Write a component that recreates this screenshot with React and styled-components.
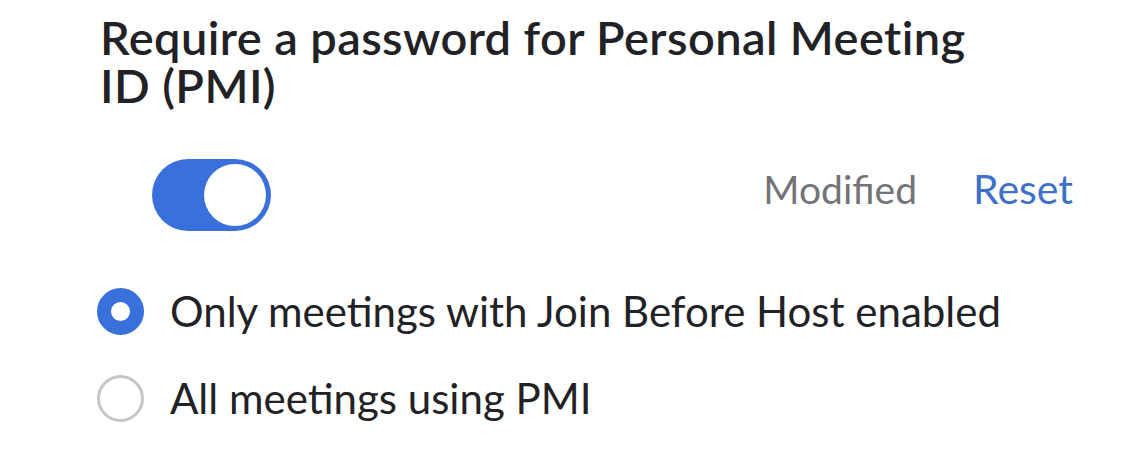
import React, { useState } from "react";
import styled, { createGlobalStyle } from "styled-components";

const GlobalStyle = createGlobalStyle`
  body {
    margin: 0;
    background: #fff;
    font-family: "Lato", "Liberation Sans", sans-serif;
  }
`;

const Page = styled.div`
  width: 1124px;
  height: 454px;
  box-sizing: border-box;
  padding: 13px 51px 0 97px;
`;

const Title = styled.h1`
  margin: 0 0 0 3px;
  font-size: 47px;
  line-height: 48px;
  font-weight: 600;
  letter-spacing: 0.4px;
  color: #222226;
  width: 910px;
`;

const ToggleRow = styled.div`
  display: flex;
  align-items: center;
  margin-top: 50px;
  padding-left: 55px;
`;

const Switch = styled.button`
  width: 119px;
  height: 72px;
  border-radius: 36px;
  border: none;
  padding: 5px;
  display: flex;
  justify-content: ${(p) => (p.on ? "flex-end" : "flex-start")};
  background: ${(p) => (p.on ? "#3a70dc" : "#d0d0d4")};
  cursor: pointer;
`;

const Knob = styled.span`
  width: 62px;
  height: 62px;
  border-radius: 50%;
  background: #fff;
`;

const Actions = styled.div`
  margin-left: auto;
  margin-bottom: 14px;
  display: flex;
  align-items: baseline;
  gap: 56px;
`;

const Status = styled.span`
  font-size: 39px;
  color: #737378;
`;

const ResetLink = styled.a`
  color: #3d70c9;
  font-size: 41px;
  cursor: pointer;
`;

const Options = styled.div`
  display: flex;
  flex-direction: column;
  gap: 37px;
  margin-top: 55px;
`;

const Option = styled.label`
  display: flex;
  align-items: center;
  gap: 26px;
  font-size: 42px;
  color: #222226;
  cursor: pointer;
`;

const Radio = styled.span`
  width: 47px;
  height: 47px;
  box-sizing: border-box;
  border-radius: 50%;
  flex-shrink: 0;
  border: ${(p) => (p.checked ? "14px solid #3a70dc" : "3px solid #c6c6c8")};
  background: #fff;
`;

const choices = [
  "Only meetings with Join Before Host enabled",
  "All meetings using PMI",
];

export default function App() {
  const [on, setOn] = useState(true);
  const [picked, setPicked] = useState(0);

  return (
    <Page>
      <GlobalStyle />
      <Title>Require a password for Personal Meeting ID (PMI)</Title>
      <ToggleRow>
        <Switch on={on} onClick={() => setOn(!on)}>
          <Knob />
        </Switch>
        <Actions>
          <Status>Modified</Status>
          <ResetLink>Reset</ResetLink>
        </Actions>
      </ToggleRow>
      <Options>
        {choices.map((c, i) => (
          <Option key={c} onClick={() => setPicked(i)}>
            <Radio checked={picked === i} />
            {c}
          </Option>
        ))}
      </Options>
    </Page>
  );
}
